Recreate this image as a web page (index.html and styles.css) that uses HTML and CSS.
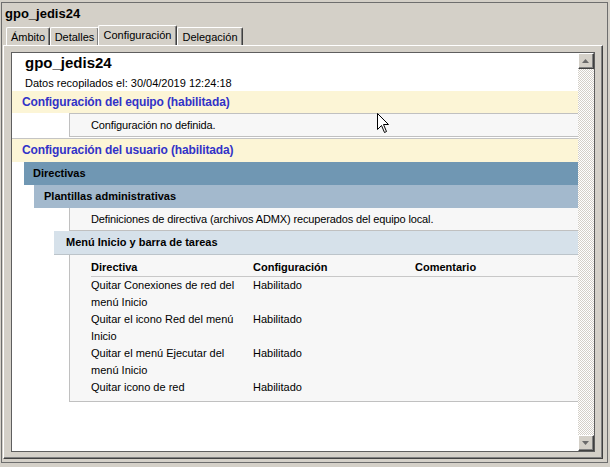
FILE: index.html
```html
<!DOCTYPE html>
<html lang="es">
<head>
<meta charset="utf-8">
<title>gpo_jedis24</title>
<link rel="stylesheet" href="styles.css">
</head>
<body>
<div class="window">
  <div class="title">gpo_jedis24</div>
  <div class="tabs">
    <div class="tab t1">Ámbito</div>
    <div class="tab t2">Detalles</div>
    <div class="tab t3 active">Configuración</div>
    <div class="tab t4">Delegación</div>
  </div>
  <div class="panel">
    <div class="report">
      <div class="content">
        <div class="hdr">
          <div class="gpo-name">gpo_jedis24</div>
          <div class="collected">Datos recopilados el: 30/04/2019 12:24:18</div>
        </div>
        <div class="band">Configuración del equipo (habilitada)</div>
        <div class="info first">Configuración no definida.</div>
        <div class="band user">Configuración del usuario (habilitada)</div>
        <div class="lvl1">Directivas</div>
        <div class="lvl2">Plantillas administrativas</div>
        <div class="info">Definiciones de directiva (archivos ADMX) recuperados del equipo local.</div>
        <div class="lvl3">Menú Inicio y barra de tareas</div>
        <div class="tablebox">
          <div class="trow thead">
            <div class="c1">Directiva</div>
            <div class="c2">Configuración</div>
            <div class="c3">Comentario</div>
          </div>
          <div class="trow">
            <div class="c1">Quitar Conexiones de red del menú Inicio</div>
            <div class="c2">Habilitado</div>
            <div class="c3"></div>
          </div>
          <div class="trow">
            <div class="c1">Quitar el icono Red del menú Inicio</div>
            <div class="c2">Habilitado</div>
            <div class="c3"></div>
          </div>
          <div class="trow">
            <div class="c1">Quitar el menú Ejecutar del menú Inicio</div>
            <div class="c2">Habilitado</div>
            <div class="c3"></div>
          </div>
          <div class="trow">
            <div class="c1">Quitar icono de red</div>
            <div class="c2">Habilitado</div>
            <div class="c3"></div>
          </div>
        </div>
      </div>
      <div class="scrollbar">
        <div class="sbtn"><svg width="7" height="4" viewBox="0 0 7 4"><path d="M3.5 0 L7 4 H0 Z" fill="#6a6a6a"/></svg></div>
        <div class="track"></div>
        <div class="sbtn"><svg width="7" height="4" viewBox="0 0 7 4"><path d="M0 0 H7 L3.5 4 Z" fill="#6a6a6a"/></svg></div>
      </div>
    </div>
  </div>
</div>
<svg class="cursor" width="13" height="21" viewBox="0 0 13 21"><path d="M0.5 0.5 V16.5 L4.5 12.5 L7.5 19.5 L9.5 18.5 L6.5 11.5 H11.5 Z" fill="#fff" stroke="#000" stroke-width="1"/></svg>
</body>
</html>
```
FILE: styles.css
```css
* { box-sizing: border-box; }
html, body { margin: 0; padding: 0; }
body {
  width: 610px;
  height: 467px;
  background: #d4d0c8;
  font-family: "Liberation Sans", Arial, sans-serif;
  font-size: 11px;
  color: #000;
  position: relative;
  overflow: hidden;
}
.window {
  margin: 2px 0 0 1px;
  width: 607px;
  height: 461px;
  border: 1px solid #6e6e6e;
  display: flex;
  flex-direction: column;
}
.title {
  height: 22px;
  padding: 2px 0 0 3px;
  font-size: 13px;
  font-weight: bold;
  line-height: 17px;
}
.tabs {
  height: 20px;
  display: flex;
  align-items: flex-end;
  padding-left: 4px;
}
.tab {
  height: 18px;
  border-top: 1px solid #fff;
  border-left: 1px solid #fff;
  border-right: 1px solid #404040;
  box-shadow: inset -1px 0 #808080;
  border-radius: 2px 2px 0 0;
  text-align: center;
  line-height: 19px;
  background: #d4d0c8;
}
.t1 { width: 44px; }
.t2 { width: 49px; }
.t3 { width: 79px; }
.t4 { width: 66px; }
.tab.active {
  height: 20px;
  margin: 0 -1px 0 -1px;
  line-height: 19px;
  position: relative;
  z-index: 1;
}
.t4 { margin-left: 1px; }
.panel {
  margin: 0 4px 3px 1px;
  height: 414px;
  border: 1px solid;
  border-color: #fff #404040 #404040 #fff;
  box-shadow: inset -1px -1px #808080;
  padding: 6px 7px 6px 7px;
}
.report {
  height: 400px;
  border: 1px solid #5e5e5e;
  background: #fff;
  display: flex;
}
.content {
  width: 566px;
  overflow: hidden;
}
.hdr { padding-left: 13px; }
.gpo-name {
  height: 20px;
  line-height: 20px;
  font-size: 15px;
  font-weight: bold;
}
.collected {
  height: 18px;
  padding-top: 2px;
  line-height: 16px;
}
.band {
  height: 22px;
  line-height: 22px;
  background: #fcf5d6;
  color: #3232c8;
  font-size: 12px;
  font-weight: bold;
  letter-spacing: -0.12px;
  padding-left: 10px;
}
.band.user {
  margin-top: 1px;
  height: 24px;
  border-top: 1px solid #c4c4c4;
  line-height: 23px;
}
.info {
  margin-left: 57px;
  height: 23px;
  line-height: 22px;
  padding-left: 21px;
  background: #f7f7f7;
  border-left: 1px solid #c0c0c0;
  border-bottom: 1px solid #c0c0c0;
  white-space: nowrap;
  letter-spacing: -0.13px;
}
.info.first {
  height: 24px;
  border-top: 1px solid #c0c0c0;
}
.lvl1, .lvl2, .lvl3 {
  height: 23px;
  line-height: 23px;
  font-weight: bold;
}
.lvl1 {
  margin-left: 12px;
  padding-left: 9px;
  background: #7097b3;
}
.lvl2 {
  margin-left: 22px;
  padding-left: 10px;
  background: #a3b9cd;
}
.lvl3 {
  margin-left: 42px;
  padding-left: 12px;
  height: 24px;
  background: #d6e1ea;
  border-bottom: 1px solid #bcc4ca;
}
.tablebox {
  margin-left: 57px;
  background: #f7f7f7;
  border-left: 1px solid #c0c0c0;
  border-bottom: 1px solid #c0c0c0;
  padding: 0 0 5px 21px;
}
.trow {
  display: grid;
  grid-template-columns: 162px 162px 1fr;
  line-height: 17px;
}
.trow .c1 { padding-right: 14px; }
.thead {
  height: 22px;
  padding-top: 4px;
  font-weight: bold;
  border-bottom: 1px solid #c8c8c8;
}
.scrollbar {
  width: 16px;
  display: flex;
  flex-direction: column;
}
.sbtn {
  height: 16px;
  background: #d4d0c8;
  border: 1px solid;
  border-color: #fff #404040 #404040 #fff;
  box-shadow: inset -1px -1px #808080;
  display: flex;
  align-items: center;
  justify-content: center;
}
.sbtn svg { display: block; margin: 0 1px 1px 0; }
.track {
  flex: 1;
  background: repeating-conic-gradient(#d4d0c8 0 25%, #fff 0 50%) 0 0 / 2px 2px;
}
.cursor {
  position: absolute;
  left: 377px;
  top: 113px;
}
```
